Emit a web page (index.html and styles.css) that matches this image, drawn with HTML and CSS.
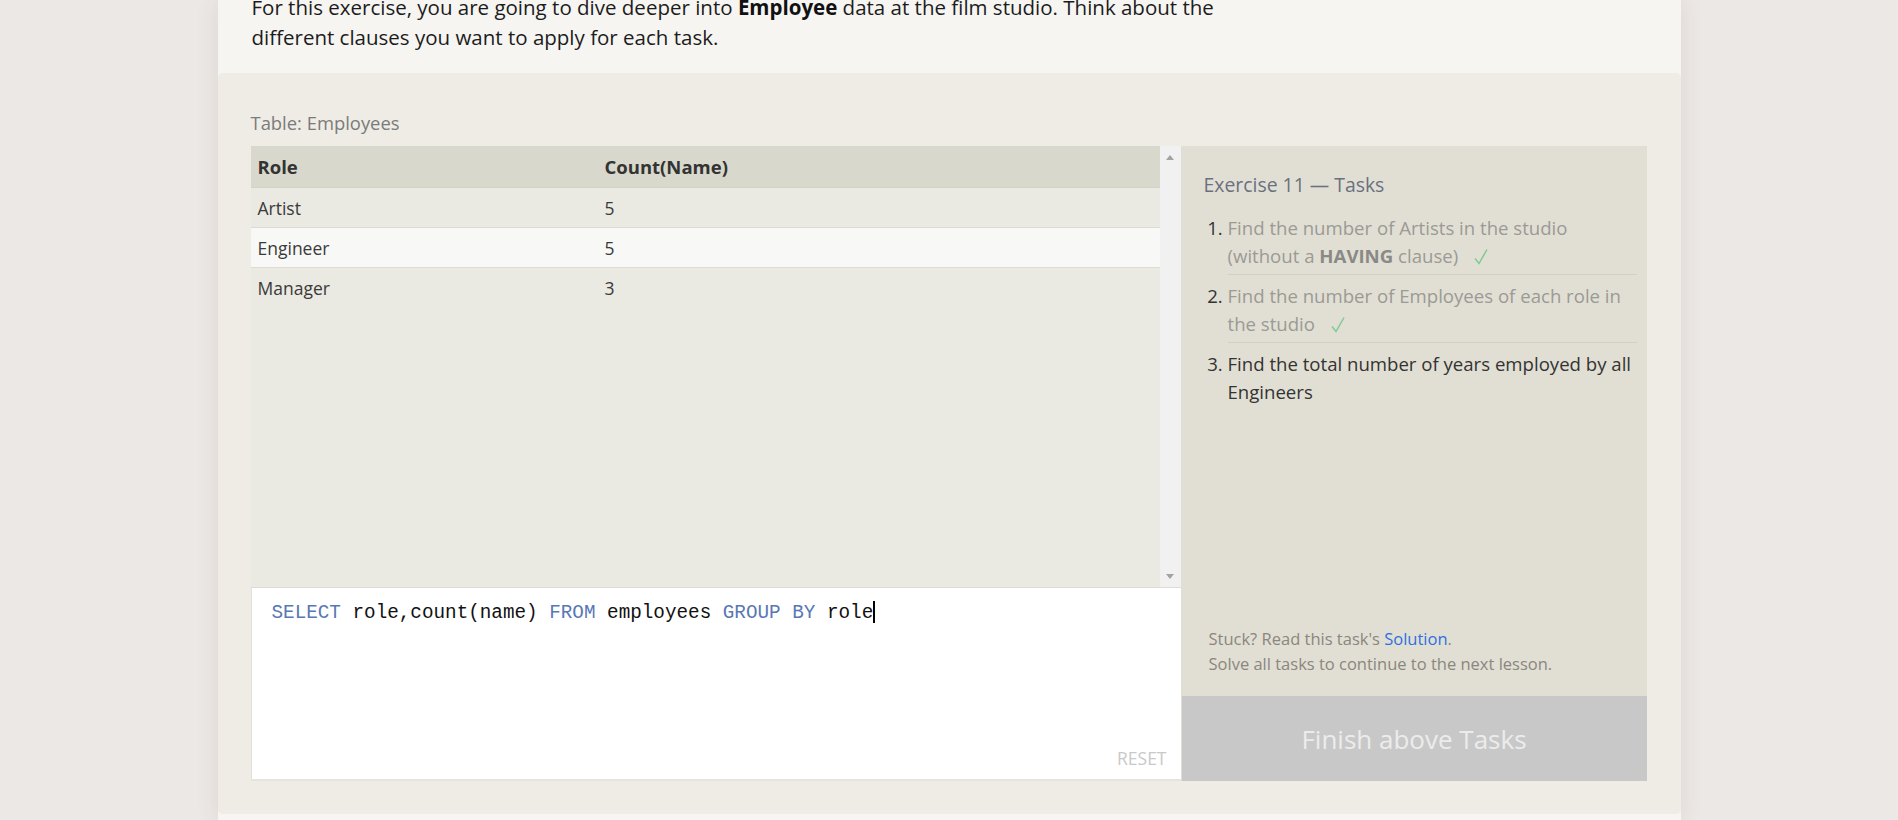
FILE: index.html
```html
<!DOCTYPE html>
<html lang="en">
<head>
<meta charset="utf-8">
<title>Exercise 11 — Tasks</title>
<link rel="stylesheet" href="styles.css">
</head>
<body>
<div class="card">
  <section class="intro">
    <p>For this exercise, you are going to dive deeper into <b>Employee</b> data at the film studio. Think about the different clauses you want to apply for each task.</p>
  </section>
  <section class="exercise">
    <div class="table-label">Table: Employees</div>
    <div class="workspace">
      <div class="left">
        <div class="viewer">
          <div class="table-wrap">
            <table class="results">
              <thead>
                <tr><th class="col-role">Role</th><th>Count(Name)</th></tr>
              </thead>
              <tbody>
                <tr><td>Artist</td><td>5</td></tr>
                <tr class="alt"><td>Engineer</td><td>5</td></tr>
                <tr><td>Manager</td><td>3</td></tr>
              </tbody>
            </table>
          </div>
          <div class="scrollbar">
            <span class="arrow up"></span>
            <span class="arrow down"></span>
          </div>
        </div>
        <div class="editor">
          <div class="code"><span class="kw">SELECT</span> role,count(name) <span class="kw">FROM</span> employees <span class="kw">GROUP BY</span> role<span class="caret"></span></div>
          <div class="reset">RESET</div>
        </div>
      </div>
      <div class="tasks">
        <div class="tasks-body">
          <h3 class="tasks-title">Exercise 11 — Tasks</h3>
          <ol class="task-list">
            <li class="done">Find the number of Artists in the studio (without a <b>HAVING</b> clause)<svg class="check" width="14" height="17" viewBox="0 0 14 17"><path d="M1 10.5 L5 15.5 L13 1.5" fill="none" stroke="#7ccb95" stroke-width="1.5"/></svg></li>
            <li class="done">Find the number of Employees of each role in the studio<svg class="check" width="14" height="17" viewBox="0 0 14 17"><path d="M1 10.5 L5 15.5 L13 1.5" fill="none" stroke="#7ccb95" stroke-width="1.5"/></svg></li>
            <li>Find the total number of years employed by all Engineers</li>
          </ol>
        </div>
        <div class="tasks-footer">
          <div>Stuck? Read this task's <a href="#">Solution</a>.</div>
          <div>Solve all tasks to continue to the next lesson.</div>
        </div>
        <div class="finish">Finish above Tasks</div>
      </div>
    </div>
  </section>
</div>
</body>
</html>
```

FILE: styles.css
```css
html, body {
  margin: 0;
  padding: 0;
}
body {
  background: #ece8e5;
  height: 820px;
  overflow: hidden;
  font-family: "Open Sans", "Noto Sans", sans-serif;
}
.card {
  width: 1463px;
  margin: 0 auto;
  min-height: 820px;
  background: #f6f5f2;
  box-shadow: 0 0 22px rgba(80, 60, 50, 0.10);
}
.intro {
  display: flow-root;
  padding: 0 34px 21px;
  height: 52px;
}
.intro p {
  margin: -8px 0 0;
  max-width: 1010px;
  font-size: 20.5px;
  line-height: 30px;
  color: #1c1c1c;
}
.intro b {
  font-weight: 700;
  color: #111;
}
.exercise {
  background: #efece5;
  border-radius: 5px;
  padding: 38px 34px 33px 33px;
}
.table-label {
  font-size: 18.4px;
  line-height: 24px;
  color: #7b7b7b;
  margin-bottom: 11px;
}
.workspace {
  display: grid;
  grid-template-columns: 930px 466px;
  height: 635px;
}
.left {
  display: flex;
  flex-direction: column;
}
.viewer {
  height: 441px;
  display: flex;
  border-bottom: 1px solid #dedcd4;
}
.table-wrap {
  flex: 1;
  background: #eae9e2;
}
.results {
  width: 100%;
  border-collapse: collapse;
  font-size: 17.5px;
  color: #3a3a3a;
}
.results th {
  background: #d9d8cc;
  text-align: left;
  font-size: 18.5px;
  font-weight: 700;
  color: #333;
  height: 41px;
  padding: 0 7px;
  border-bottom: 1px solid #d3d2c6;
}
.results th.col-role {
  width: 333px;
}
.results td {
  height: 39px;
  padding: 0 7px;
  border-bottom: 1px solid #dcdbd5;
}
.results tr:last-child td {
  border-bottom: none;
}
.results tr.alt td {
  background: #f8f8f7;
}
.scrollbar {
  width: 21px;
  background: #f1f1f1;
  display: flex;
  flex-direction: column;
  justify-content: space-between;
  align-items: center;
  padding: 9px 0 8px;
  box-sizing: border-box;
}
.arrow {
  width: 0;
  height: 0;
  border-left: 4px solid transparent;
  border-right: 4px solid transparent;
}
.arrow.up {
  border-bottom: 5px solid #a3a3a3;
}
.arrow.down {
  border-top: 5px solid #a3a3a3;
}
.editor {
  flex: 1;
  background: #fff;
  border-left: 1px solid #e3e1d8;
  border-bottom: 2px solid #e6e4dc;
  display: flex;
  flex-direction: column;
}
.code {
  flex: 1;
  padding: 13px 20px 0;
  font-family: "Liberation Mono", "DejaVu Sans Mono", monospace;
  font-size: 19.3px;
  line-height: 24px;
  color: #111;
  white-space: pre;
}
.code .kw {
  color: #5877b5;
}
.caret {
  display: inline-block;
  width: 2px;
  height: 22px;
  background: #000;
  vertical-align: -5px;
}
.reset {
  align-self: flex-end;
  padding: 0 14px 10px 0;
  font-size: 17.5px;
  line-height: 22px;
  color: #c9c9c9;
}
.tasks {
  background: #e1dfd4;
  display: flex;
  flex-direction: column;
}
.tasks-body {
  padding: 25px 10px 0 23px;
}
.tasks-title {
  margin: 0 0 8px;
  font-size: 19.4px;
  line-height: 28px;
  font-weight: 400;
  color: #6b7080;
}
.task-list {
  margin: 0;
  padding-left: 24px;
  font-size: 18.6px;
  line-height: 28px;
  color: #333;
}
.task-list li {
  padding: 7px 0 4px;
  border-bottom: 1px solid #d2d0c5;
}
.task-list li:last-child {
  border-bottom: none;
}
.task-list li.done {
  color: #9b9a95;
}
.task-list li.done b {
  color: #8a8985;
}
.task-list li::marker {
  color: #333;
}
.check {
  margin-left: 16px;
  vertical-align: -2px;
}
.tasks-footer {
  margin-top: auto;
  padding: 0 0 20px 28px;
  font-size: 16.5px;
  line-height: 25px;
  color: #8b867e;
}
.tasks-footer a {
  color: #2f6fe0;
  text-decoration: none;
}
.finish {
  height: 85px;
  margin-left: 1px;
  background: #c8c8c8;
  color: #ececec;
  font-size: 26px;
  display: flex;
  align-items: center;
  justify-content: center;
}
```
